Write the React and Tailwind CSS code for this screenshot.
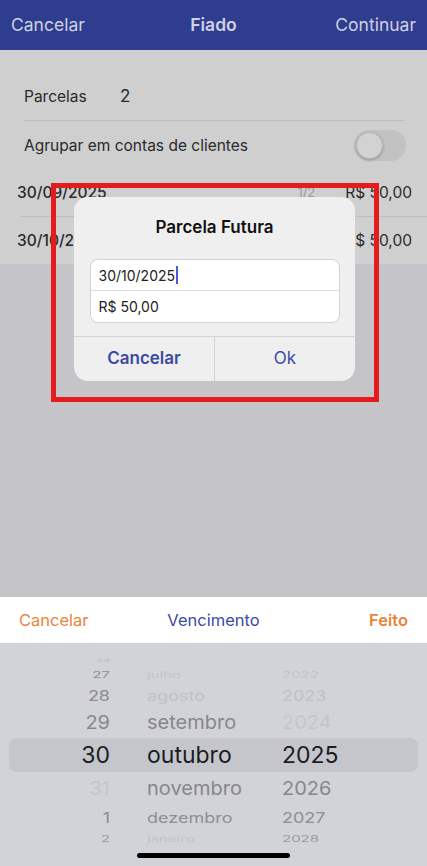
const DAYS = [
  { d: '24', m: '', y: '', h: 'h-[12px]', size: 'text-[11px]', sy: 'scale-y-[0.35]', dc: 'text-[#b4b6bb]', mc: 'text-[#c8cacf]', yc: 'text-[#c8cacf]' },
  { d: '27', m: 'julho', y: '2022', h: 'h-[18px]', size: 'text-[15px]', sy: 'scale-y-[0.55]', dc: 'text-[#8e8f94]', mc: 'text-[#c2c4c9]', yc: 'text-[#c2c4c9]' },
  { d: '28', m: 'agosto', y: '2023', h: 'h-[24px]', size: 'text-[18px]', sy: 'scale-y-[0.8]', dc: 'text-[#8a8b90]', mc: 'text-[#bfc1c6]', yc: 'text-[#bfc1c6]' },
  { d: '29', m: 'setembro', y: '2024', h: 'h-[32px]', size: 'text-[20px]', sy: 'scale-y-[0.95]', dc: 'text-[#86878c]', mc: 'text-[#86878c]', yc: 'text-[#c4c6cb]' },
];
const DAYS_BELOW = [
  { d: '31', m: 'novembro', y: '2026', h: 'h-[32px]', size: 'text-[20px]', sy: 'scale-y-[0.95]', dc: 'text-[#c4c6cb]', mc: 'text-[#86878c]', yc: 'text-[#86878c]' },
  { d: '1', m: 'dezembro', y: '2027', h: 'h-[24px]', size: 'text-[18px]', sy: 'scale-y-[0.8]', dc: 'text-[#8a8b90]', mc: 'text-[#8e8f94]', yc: 'text-[#8e8f94]' },
  { d: '2', m: 'janeiro', y: '2028', h: 'h-[18px]', size: 'text-[15px]', sy: 'scale-y-[0.55]', dc: 'text-[#9a9ba0]', mc: 'text-[#c2c4c9]', yc: 'text-[#9a9ba0]' },
];

function PickerRow({ r }) {
  return (
    <div className={`grid grid-cols-[110px_172px_1fr] items-center ${r.h} ${r.size}`}>
      <span className={`text-right ${r.sy} ${r.dc}`}>{r.d}</span>
      <span className={`pl-[37px] ${r.sy} ${r.mc}`}>{r.m}</span>
      <span className={`${r.sy} ${r.yc}`}>{r.y}</span>
    </div>
  );
}

function Row({ children, className = '' }) {
  return <div className={`flex items-center ${className}`}>{children}</div>;
}

export default function App() {
  return (
    <div className="w-[427px] h-[866px] relative overflow-hidden flex flex-col bg-[#c4c4c9]"
         style={{ fontFamily: 'Inter, "Noto Sans", sans-serif' }}>
      {/* Nav bar */}
      <div className="h-[50px] shrink-0 bg-[#2f3d8f] grid grid-cols-[1fr_auto_1fr] items-center px-[11px] text-[17.5px] text-[#cfd2e3]">
        <span>Cancelar</span>
        <span className="font-semibold">Fiado</span>
        <span className="text-right">Continuar</span>
      </div>

      {/* Table */}
      <div className="bg-[#cfcfcf] pt-[24px] text-[#2a2a2a]">
        <Row className="h-[47px] ml-[24px] mr-[22px] border-b border-[#bdbdbd]">
          <span className="text-[15.5px] w-[96px]">Parcelas</span>
          <span className="text-[17px]">2</span>
        </Row>
        <Row className="h-[49px] pl-[24px] pr-[21px] justify-between">
          <span className="text-[15.5px]">Agrupar em contas de clientes</span>
          <div className="w-[52px] h-[31px] rounded-full bg-[#c2c2c2] p-[2px] flex">
            <div className="w-[27px] h-[27px] rounded-full bg-[#d2d2d2] shadow-[0_1px_3px_rgba(0,0,0,0.25)] border border-[#bbbbbb]" />
          </div>
        </Row>
        <Row className="h-[46px] pl-[17px] pr-[15px]">
          <span className="text-[15.5px] font-medium flex-1">30/09/2025</span>
          <span className="text-[13px] text-[#9a9a9a] mr-[30px]">1/2</span>
          <span className="text-[15.5px]">R$ 50,00</span>
        </Row>
        <div className="ml-[20px] h-px bg-[#bdbdbd]" />
        <Row className="h-[47px] pl-[17px] pr-[15px]">
          <span className="text-[15.5px] font-medium flex-1">30/10/2025</span>
          <span className="text-[13px] text-[#9a9a9a] mr-[30px]">2/2</span>
          <span className="text-[15.5px]">R$ 50,00</span>
        </Row>
      </div>

      <div className="flex-1" />

      {/* Bottom sheet */}
      <div className="h-[46px] shrink-0 bg-white grid grid-cols-[1fr_auto_1fr] items-center px-[19px] text-[16.5px]">
        <span className="text-[#e8843c]">Cancelar</span>
        <span className="text-[#3d4a9f]">Vencimento</span>
        <span className="text-[#e8843c] font-semibold text-right">Feito</span>
      </div>
      <div className="h-[223px] shrink-0 bg-[#d1d3d9] pt-[9px] flex flex-col">
        {DAYS.map(r => <PickerRow key={r.d} r={r} />)}
        <div className="mx-[9px] h-[34px] rounded-lg bg-[#c4c6cc] grid grid-cols-[101px_172px_1fr] items-center text-[23px] text-[#1c1c1e]">
          <span className="text-right">30</span>
          <span className="pl-[37px]">outubro</span>
          <span>2025</span>
        </div>
        {DAYS_BELOW.map(r => <PickerRow key={r.d} r={r} />)}
        <div className="mt-[7px] mx-auto w-[153px] h-[5px] rounded-full bg-black" />
      </div>

      {/* Alert overlay */}
      <div className="absolute left-[74px] top-[197px] w-[281px] h-[184px] rounded-[14px] bg-[#efeff0] flex flex-col items-center">
        <div className="pt-[18px] h-[62px] text-[17px] font-semibold text-[#111]">Parcela Futura</div>
        <div className="w-[250px] bg-white rounded-[8px] border border-[#d3d3d6] text-[14px] text-[#222]">
          <div className="h-[31px] flex items-center px-[8px] border-b border-[#dcdcdf]">
            30/10/2025<span className="w-[2px] h-[18px] bg-[#4a5bd0] ml-[1px]" />
          </div>
          <div className="h-[31px] flex items-center px-[8px]">R$ 50,00</div>
        </div>
        <div className="mt-[13px] w-full flex-1 border-t border-[#d3d3d6] flex text-[17px] text-[#3b4a9f]">
          <div className="flex-1 flex items-center justify-center font-semibold border-r border-[#d3d3d6]">Cancelar</div>
          <div className="flex-1 flex items-center justify-center">Ok</div>
        </div>
      </div>

      {/* Red highlight box */}
      <div className="absolute left-[51px] top-[183px] w-[328px] h-[219px] border-[5px] border-[#e51b1d]" />
    </div>
  );
}
